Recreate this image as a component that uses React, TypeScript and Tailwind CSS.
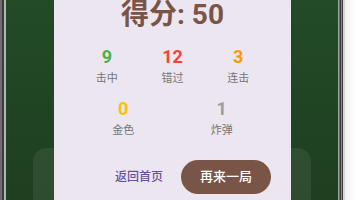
import React from 'react';

const FONT = { fontFamily: 'Roboto, "Noto Sans CJK SC", sans-serif' };

const row1 = [
  { value: 9, label: '击中', color: 'text-[#4caf50]' },
  { value: 12, label: '错过', color: 'text-[#f44336]' },
  { value: 3, label: '连击', color: 'text-[#ff9800]' },
];

const row2 = [
  { value: 0, label: '金色', color: 'text-[#ffc107]' },
  { value: 1, label: '炸弹', color: 'text-[#9e9e9e]' },
];

function Stat({ value, label, color }: { value: number; label: string; color: string }) {
  return (
    <div className="flex flex-1 flex-col items-center gap-[2px]">
      <div className={`text-[18px] font-bold leading-[24px] ${color}`}>{value}</div>
      <div className="text-[11px] leading-[16px] text-[#757575]">{label}</div>
    </div>
  );
}

export default function App() {
  return (
    <div className="flex h-[200px] w-[356px] overflow-hidden" style={FONT}>
      {/* device frame, left */}
      <div className="w-[2px] bg-[#6d6d6d]" />
      <div className="w-[2px] bg-[#3c3c3c]" />
      <div className="w-[2px] bg-[#b5b5b5]" />

      <div className="relative w-[332px] bg-gradient-to-b from-[#234b26] to-[#1e3f20]">
        {/* content behind the dialog */}
        <div className="px-[27px] pt-[148px]">
          <div className="h-[80px] rounded-[14px] bg-white/[0.07]" />
        </div>

        {/* result dialog */}
        <div className="absolute left-[48px] right-[47px] top-[-30px] bottom-[-30px] bg-[#ece6f0] px-[20px] pt-[31px]">
          <div className="text-center text-[28px] font-bold leading-[28px] text-[#795548]">得分: 50</div>

          <div className="mt-[16px] flex">
            {row1.map(s => (
              <Stat key={s.label} {...s} />
            ))}
          </div>

          <div className="mt-[10px] flex">
            {row2.map(s => (
              <Stat key={s.label} {...s} />
            ))}
          </div>

          <div className="mt-[21px] flex items-center justify-end gap-[8px]">
            <button className="h-[34px] px-[10px] text-[12px] font-medium text-[#6750a4]">返回首页</button>
            <button className="h-[34px] w-[90px] rounded-full bg-[#795548] text-[13px] font-medium text-white">
              再来一局
            </button>
          </div>
        </div>
      </div>

      {/* device frame, right */}
      <div className="w-[1px] bg-[#a0a0a0]" />
      <div className="w-[1px] bg-[#6b6b6b]" />
      <div className="w-[1px] bg-[#3a3a3a]" />
      <div className="w-[1px] bg-[#8a8a8a]" />
      <div className="w-[1px] bg-[#3a3a3a]" />
      <div className="w-[2px] bg-[#d8d8d8]" />
      <div className="flex-1 bg-gradient-to-r from-[#f2f2f2] to-white" />
    </div>
  );
}
